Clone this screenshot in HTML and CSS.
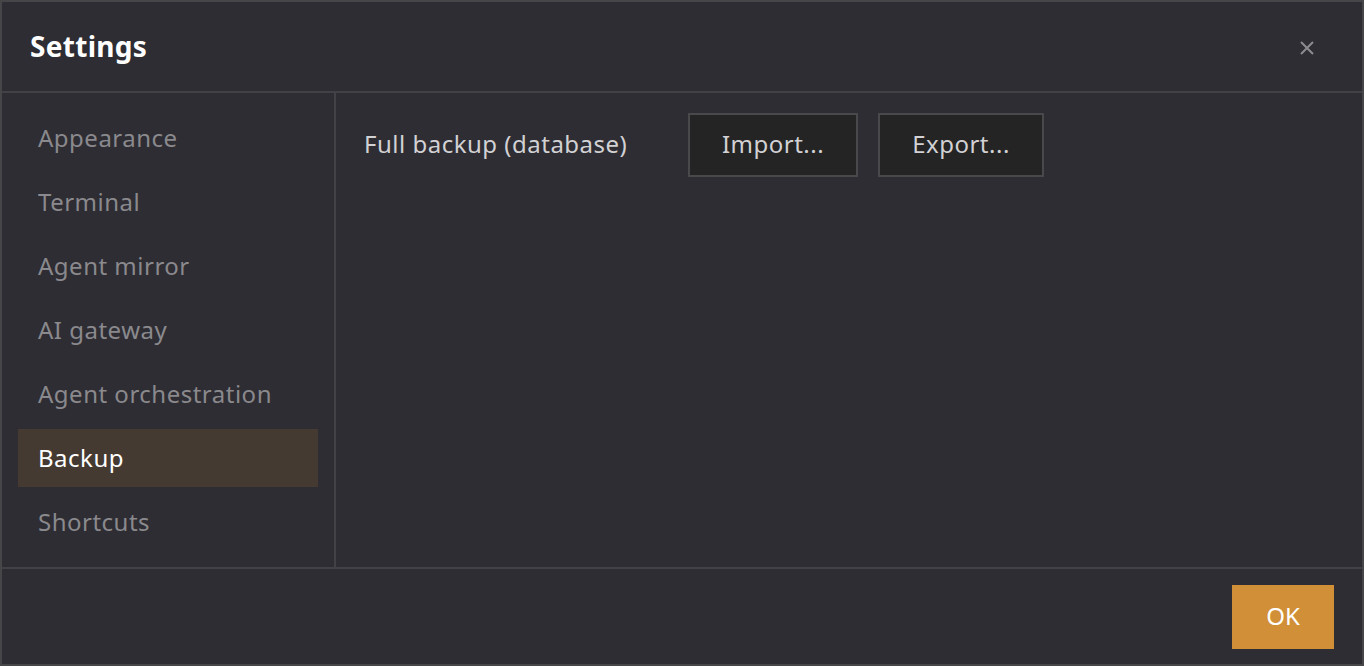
FILE: index.html
```html
<!DOCTYPE html>
<html lang="en">
<head>
  <meta charset="UTF-8">
  <title>Settings</title>
  <meta name="viewport" content="width=device-width, initial-scale=1.0">
  <link rel="stylesheet" href="styles.css">
</head>
<body>

<div class="dialog">
  <div class="dialog-header">
    <h1>Settings</h1>
    <button class="close-btn" aria-label="Close">
      <svg width="14" height="14" viewBox="0 0 14 14">
        <path d="M1 1 L13 13 M13 1 L1 13" stroke="currentColor" stroke-width="2" fill="none"/>
      </svg>
    </button>
  </div>

  <div class="dialog-body">
    <div class="sidebar">
      <div class="nav-item">Appearance</div>
      <div class="nav-item">Terminal</div>
      <div class="nav-item">Agent mirror</div>
      <div class="nav-item">AI gateway</div>
      <div class="nav-item">Agent orchestration</div>
      <div class="nav-item active">Backup</div>
      <div class="nav-item">Shortcuts</div>
    </div>

    <div class="content">
      <div class="setting-row">
        <span class="setting-label">Full backup (database)</span>
        <button class="btn btn-import">Import...</button>
        <button class="btn btn-export">Export...</button>
      </div>
    </div>
  </div>

  <div class="dialog-footer">
    <button class="btn-primary">OK</button>
  </div>
</div>

</body>
</html>
```

FILE: styles.css
```css
* {
  box-sizing: border-box;
  margin: 0;
  padding: 0;
  font-family: 'Noto Sans', sans-serif;
}

body {
  height: 100vh;
  background: #2e2d33;
}

.dialog {
  height: 100vh;
  border: 2px solid #464548;
  background: #2e2d33;
  display: flex;
  flex-direction: column;
}

.dialog-header {
  height: 91px;
  flex-shrink: 0;
  border-bottom: 2px solid #424145;
  display: flex;
  align-items: center;
  justify-content: space-between;
  padding: 0 35px 2px 28px;
}

.dialog-header h1 {
  font-size: 28px;
  font-weight: 700;
  color: #ffffff;
  letter-spacing: 0.3px;
}

.close-btn {
  width: 40px;
  height: 40px;
  margin-top: 4px;
  background: transparent;
  border: none;
  color: #8c8b8f;
  display: flex;
  align-items: center;
  justify-content: center;
  cursor: pointer;
}

.dialog-body {
  flex: 1;
  display: flex;
  min-height: 0;
}

.sidebar {
  width: 334px;
  flex-shrink: 0;
  border-right: 2px solid #424145;
  padding: 16px;
  display: flex;
  flex-direction: column;
  gap: 6px;
}

.nav-item {
  height: 58px;
  padding: 0 20px 2px;
  display: flex;
  align-items: center;
  font-size: 24px;
  letter-spacing: 0.5px;
  color: #8a898d;
  cursor: pointer;
}

.nav-item.active {
  background: #443a31;
  color: #ffffff;
}

.content {
  flex: 1;
  padding: 20px 28px;
}

.setting-row {
  display: flex;
  align-items: center;
  gap: 20px;
}

.setting-label {
  width: 304px;
  padding-bottom: 4px;
  font-size: 24px;
  letter-spacing: 0.5px;
  color: #d2d1d4;
}

.btn {
  height: 64px;
  padding: 0 0 4px;
  background: #242424;
  border: 2px solid #49484b;
  color: #d2d1d4;
  font-size: 24px;
  letter-spacing: 0.5px;
  cursor: pointer;
}

.btn-import {
  width: 170px;
}

.btn-export {
  width: 166px;
}

.dialog-footer {
  height: 97px;
  flex-shrink: 0;
  border-top: 2px solid #424145;
  display: flex;
  justify-content: flex-end;
  align-items: flex-start;
  padding: 16px 28px;
}

.btn-primary {
  width: 102px;
  height: 64px;
  padding-bottom: 4px;
  background: #d18f37;
  border: none;
  color: #ffffff;
  font-size: 24px;
  cursor: pointer;
}
```
